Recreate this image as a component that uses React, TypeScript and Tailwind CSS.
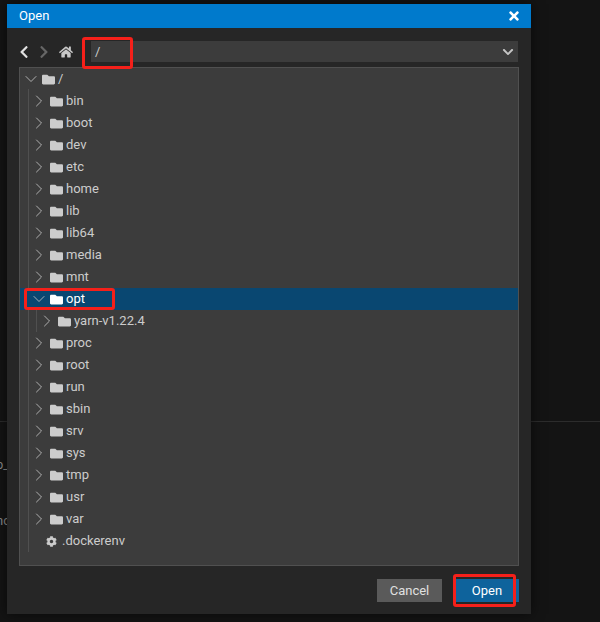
import { ChevronDown, ChevronRight } from 'lucide-react';
import { FaChevronDown, FaChevronLeft, FaChevronRight, FaCog, FaFolder, FaHome, FaTimes } from 'react-icons/fa';

const before = ['bin', 'boot', 'dev', 'etc', 'home', 'lib', 'lib64', 'media', 'mnt'];
const after = ['proc', 'root', 'run', 'sbin', 'srv', 'sys', 'tmp', 'usr', 'var'];

function FolderRow({ name, indent, open, selected }: { name: string; indent: string; open?: boolean; selected?: boolean }) {
  const Chevron = open ? ChevronDown : ChevronRight;
  return (
    <div className={`flex h-[22px] items-center ${indent} ${selected ? 'relative bg-[#094771] text-white' : ''}`}>
      <Chevron size={20} strokeWidth={1} className="mx-[-1px] shrink-0 text-[#c5c5c5]" />
      <FaFolder className="ml-[2px] shrink-0 text-[13px]" />
      <span className="ml-[3px]">{name}</span>
    </div>
  );
}

export default function App() {
  return (
    <div className="relative h-[622px] w-[600px] overflow-hidden bg-[#141414] pt-[4px] font-['Roboto',sans-serif] text-[13px] text-[#cccccc]">
      {/* what shows behind the dialog */}
      <div className="absolute left-0 top-[421px] h-px w-full bg-[#2c2c2c]" />
      <span className="absolute left-[-4px] top-[455px] text-[#8a8a8a]">p_</span>
      <span className="absolute left-[-4px] top-[511px] text-[#8a8a8a]">nc</span>

      <div className="relative ml-[7px] flex h-[610px] w-[524px] flex-col shadow-[0_0_12px_rgba(0,0,0,0.6)]">
        <div className="flex h-[24px] shrink-0 items-center justify-between bg-[#007acc] pl-[12px] pr-[10px] text-white">
          <span>Open</span>
          <FaTimes className="text-[14px]" />
        </div>
        <div className="flex flex-1 flex-col bg-[#262626] pl-[12px] pr-[12px]">
          <div className="mt-[13px] flex h-[21px] items-center">
            <FaChevronLeft className="ml-[-2px] shrink-0 text-[14px] text-[#e2e2e2]" />
            <FaChevronRight className="ml-[6px] shrink-0 text-[14px] text-[#666666]" />
            <FaHome className="ml-[8px] shrink-0 text-[14px] text-[#c8c8c8]" />
            <div className="ml-[18px] flex h-[21px] w-[427px] shrink-0 items-center justify-between bg-[#3c3c3c] pl-[4px] pr-[4px]">
              <span>/</span>
              <FaChevronDown className="text-[12px] text-[#c5c5c5]" />
            </div>
          </div>

          <div className="relative mt-[5px] h-[499px] w-[500px] border border-[#505050] bg-[#3c3c3c] text-[#cccccc]">
            <div className="absolute bottom-[13px] left-[8px] top-[21px] w-px bg-[#505050]" />
            <div className="absolute left-[16px] top-[242px] h-[22px] w-px bg-[#505050]" />
            <FolderRow name="/" indent="pl-[2px]" open />
            {before.map((name) => (
              <FolderRow key={name} name={name} indent="pl-[10px]" />
            ))}
            <FolderRow name="opt" indent="pl-[10px]" open selected />
            <FolderRow name="yarn-v1.22.4" indent="pl-[18px]" />
            {after.map((name) => (
              <FolderRow key={name} name={name} indent="pl-[10px]" />
            ))}
            <div className="flex h-[22px] items-center pl-[26px]">
              <FaCog className="shrink-0 text-[11px]" />
              <span className="ml-[5px]">.dockerenv</span>
            </div>
          </div>

          <div className="mt-[13px] flex justify-end gap-[13px]">
            <button type="button" className="h-[23px] w-[65px] bg-[#5a5a5a] text-[#e0e0e0]">
              Cancel
            </button>
            <button type="button" className="h-[23px] w-[64px] bg-[#0e639c] text-white">
              Open
            </button>
          </div>
        </div>

        {/* red annotation boxes */}
        <div className="absolute left-[75px] top-[33px] h-[32px] w-[51px] rounded-[3px] border-[3px] border-[#f5201a]" />
        <div className="absolute left-[17px] top-[284px] h-[22px] w-[91px] rounded-[3px] border-[3px] border-[#f5201a]" />
        <div className="absolute left-[446px] top-[570px] h-[33px] w-[63px] rounded-[3px] border-[3px] border-[#f5201a]" />
      </div>
    </div>
  );
}
